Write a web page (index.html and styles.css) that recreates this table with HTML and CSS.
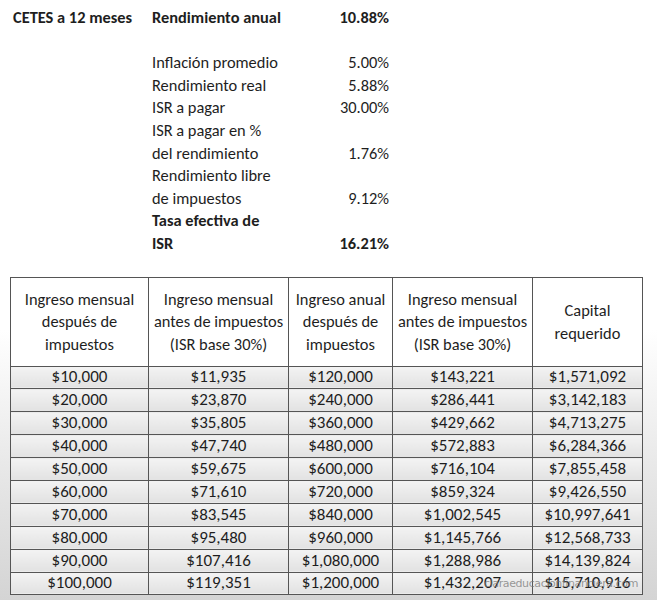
FILE: index.html
```html
<!DOCTYPE html>
<html lang="es">
<head>
<meta charset="utf-8">
<title>CETES a 12 meses</title>
<link rel="stylesheet" href="styles.css">
</head>
<body>
<div class="page">
  <div class="summary">
    <div class="c1 b">CETES a 12 meses</div><div class="c2 b">Rendimiento anual</div><div class="c3 b">10.88%</div>
    <div class="c1"></div><div class="c2">&nbsp;</div><div class="c3"></div>
    <div class="c1"></div><div class="c2">Inflación promedio</div><div class="c3">5.00%</div>
    <div class="c1"></div><div class="c2">Rendimiento real</div><div class="c3">5.88%</div>
    <div class="c1"></div><div class="c2">ISR a pagar</div><div class="c3">30.00%</div>
    <div class="c1"></div><div class="c2">ISR a pagar en %<br>del rendimiento</div><div class="c3 bottom">1.76%</div>
    <div class="c1"></div><div class="c2">Rendimiento libre<br>de impuestos</div><div class="c3 bottom">9.12%</div>
    <div class="c1"></div><div class="c2 b">Tasa efectiva de<br>ISR</div><div class="c3 b bottom">16.21%</div>
  </div>

  <div class="table-wrap">
    <table class="data">
      <colgroup>
        <col class="w1"><col class="w2"><col class="w3"><col class="w4"><col class="w5">
      </colgroup>
      <thead>
        <tr>
          <th>Ingreso mensual<br>después de<br>impuestos</th>
          <th>Ingreso mensual<br>antes de impuestos<br>(ISR base 30%)</th>
          <th>Ingreso anual<br>después de<br>impuestos</th>
          <th>Ingreso mensual<br>antes de impuestos<br>(ISR base 30%)</th>
          <th>Capital<br>requerido</th>
        </tr>
      </thead>
      <tbody>
        <tr><td>$10,000</td><td>$11,935</td><td>$120,000</td><td>$143,221</td><td>$1,571,092</td></tr>
        <tr><td>$20,000</td><td>$23,870</td><td>$240,000</td><td>$286,441</td><td>$3,142,183</td></tr>
        <tr><td>$30,000</td><td>$35,805</td><td>$360,000</td><td>$429,662</td><td>$4,713,275</td></tr>
        <tr><td>$40,000</td><td>$47,740</td><td>$480,000</td><td>$572,883</td><td>$6,284,366</td></tr>
        <tr><td>$50,000</td><td>$59,675</td><td>$600,000</td><td>$716,104</td><td>$7,855,458</td></tr>
        <tr><td>$60,000</td><td>$71,610</td><td>$720,000</td><td>$859,324</td><td>$9,426,550</td></tr>
        <tr><td>$70,000</td><td>$83,545</td><td>$840,000</td><td>$1,002,545</td><td>$10,997,641</td></tr>
        <tr><td>$80,000</td><td>$95,480</td><td>$960,000</td><td>$1,145,766</td><td>$12,568,733</td></tr>
        <tr><td>$90,000</td><td>$107,416</td><td>$1,080,000</td><td>$1,288,986</td><td>$14,139,824</td></tr>
        <tr><td>$100,000</td><td>$119,351</td><td>$1,200,000</td><td>$1,432,207</td><td>$15,710,916</td></tr>
      </tbody>
    </table>
    <div class="watermark">claraeducacionfinanciera.com</div>
  </div>
</div>
</body>
</html>
```

FILE: styles.css
```css
html, body {
  margin: 0;
  padding: 0;
}
body {
  width: 657px;
  height: 600px;
  overflow: hidden;
  font-family: Carlito, Calibri, Lato, "Liberation Sans", sans-serif;
  font-size: 16.4px;
  color: #1e1e1e;
  background: linear-gradient(to bottom, #ffffff 0px, #ffffff 330px, #e6e6e6 480px, #d4d4d4 600px);
}
.page {
  padding-top: 6px;
}
.summary {
  display: grid;
  grid-template-columns: 139px 150px 87px;
  padding-left: 13px;
  line-height: 22.6px;
}
.c3 {
  text-align: right;
  display: flex;
  justify-content: flex-end;
}
.c3.bottom {
  align-items: flex-end;
}
.b {
  font-weight: bold;
}
.table-wrap {
  position: relative;
  margin: 22px 0 0 10px;
  width: 632px;
}
.data {
  border-collapse: collapse;
  table-layout: fixed;
  width: 632px;
}
.w1 { width: 138px; }
.w2 { width: 140px; }
.w3 { width: 104px; }
.w4 { width: 140px; }
.w5 { width: 110px; }
.data th, .data td {
  border: 1.5px solid #555;
  text-align: center;
  padding: 0;
  font-weight: normal;
}
.data th {
  background: #fff;
  height: 88px;
  line-height: 22.6px;
  vertical-align: middle;
}
.data td {
  height: 21.9px;
  line-height: 20px;
  font-size: 17px;
  background: linear-gradient(to bottom, #f3f3f3, #e2e2e2);
}
.watermark {
  position: absolute;
  right: 4px;
  bottom: 5px;
  font-family: "DejaVu Sans", sans-serif;
  font-size: 11px;
  line-height: 12px;
  color: rgba(120, 120, 120, 0.75);
  letter-spacing: -0.4px;
}
```
